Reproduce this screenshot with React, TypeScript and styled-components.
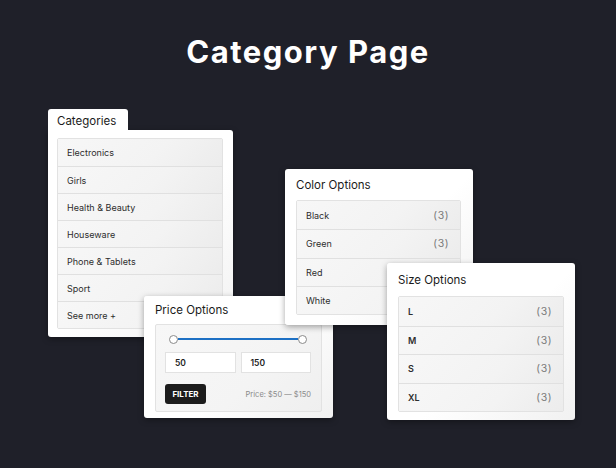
import React from "react";
import styled, { createGlobalStyle } from "styled-components";

const GlobalStyle = createGlobalStyle`
  html, body {
    margin: 0;
    padding: 0;
    background: #1f2029;
  }
  body {
    font-family: "Inter", "Open Sans", sans-serif;
  }
`;

const Page = styled.div`
  position: relative;
  width: 616px;
  height: 468px;
  background: #1f2029;
  overflow: hidden;
`;

const Heading = styled.h1`
  margin: 0;
  padding-top: 32px;
  text-align: center;
  color: #ffffff;
  font-family: "Inter", sans-serif;
  font-weight: 700;
  font-size: 31px;
  letter-spacing: 1.5px;
  line-height: 40px;
`;

// cards sit on a free canvas, overlapping each other
const Card = styled.div<{ $x: number; $y: number; $w: number; $h: number; $z: number }>`
  position: absolute;
  left: ${(p) => p.$x}px;
  top: ${(p) => p.$y}px;
  width: ${(p) => p.$w}px;
  height: ${(p) => p.$h}px;
  z-index: ${(p) => p.$z};
  box-sizing: border-box;
  background: linear-gradient(135deg, #ffffff 0%, #ffffff 55%, #f1f1f1 100%);
  border-radius: 3px;
  box-shadow: 0 2px 6px rgba(0, 0, 0, 0.35);
  display: flex;
  flex-direction: column;
`;

const CardTitle = styled.div<{ $h: number }>`
  height: ${(p) => p.$h}px;
  display: flex;
  align-items: center;
  padding-left: 11px;
  font-size: 11.5px;
  color: #1b1b1b;
`;

const Tab = styled.div`
  position: absolute;
  left: 0;
  top: -21px;
  width: 80px;
  height: 24px;
  box-sizing: border-box;
  background: #ffffff;
  border-radius: 3px 3px 0 0;
  padding: 5px 0 0 9px;
  font-size: 11.5px;
  color: #1b1b1b;
`;

const ListBox = styled.div<{ $m: string }>`
  margin: ${(p) => p.$m};
  border: 1px solid #e2e2e2;
  border-radius: 2px;
  overflow: hidden;
  display: flex;
  flex-direction: column;
`;

const Row = styled.div<{ $h: number; $bold?: boolean }>`
  height: ${(p) => p.$h}px;
  box-sizing: border-box;
  display: flex;
  align-items: center;
  justify-content: space-between;
  padding: 0 11px 0 9px;
  background: linear-gradient(135deg, #f7f7f7 0%, #f3f3f3 60%, #ececec 100%);
  font-size: 9px;
  font-weight: ${(p) => (p.$bold ? 600 : 400)};
  color: #2d2d2d;
  & + & {
    border-top: 1px solid #e0e0e0;
  }
`;

const Count = styled.span`
  font-size: 10.5px;
  font-weight: 400;
  color: #7a7a7a;
  letter-spacing: 0.5px;
`;

const PriceBox = styled.div`
  margin: 0 11px 6px 11px;
  flex: 1;
  border: 1px solid #e2e2e2;
  border-radius: 2px;
  background: linear-gradient(135deg, #f7f7f7 0%, #f4f4f4 60%, #efefef 100%);
  padding: 9px 10px 0 9px;
  display: flex;
  flex-direction: column;
`;

const Slider = styled.div`
  height: 10px;
  display: flex;
  align-items: center;
  padding: 0 4px;
`;

const Knob = styled.span`
  width: 7px;
  height: 7px;
  border-radius: 50%;
  border: 1px solid #8a8a8a;
  background: #ffffff;
  flex: none;
`;

const Track = styled.span`
  flex: 1;
  height: 2px;
  background: #1d70c4;
`;

const Inputs = styled.div`
  display: flex;
  gap: 5px;
  margin-top: 8px;
`;

const Field = styled.div`
  flex: 1;
  height: 21px;
  box-sizing: border-box;
  background: #ffffff;
  border: 1px solid #e2e2e2;
  display: flex;
  align-items: center;
  padding-left: 9px;
  font-size: 8.5px;
  font-weight: 600;
  color: #222;
`;

const Actions = styled.div`
  display: flex;
  align-items: center;
  justify-content: space-between;
  margin-top: 11px;
`;

const FilterButton = styled.div`
  width: 41px;
  height: 20px;
  border-radius: 3px;
  background: #1c1c1c;
  color: #ffffff;
  font-size: 8px;
  font-weight: 700;
  display: flex;
  align-items: center;
  justify-content: center;
`;

const PriceLabel = styled.span`
  font-size: 7.5px;
  color: #8a8a8a;
`;

const categories = ["Electronics", "Girls", "Health & Beauty", "Houseware", "Phone & Tablets", "Sport", "See more +"];
const colors = ["Black", "Green", "Red", "White"];
const sizes = ["L", "M", "S", "XL"];

const App: React.FC = () => {
  return (
    <Page>
      <GlobalStyle />
      <Heading>Category Page</Heading>

      <Card $x={48} $y={130} $w={185} $h={207} $z={1} style={{ borderTopLeftRadius: 0 }}>
        <Tab>Categories</Tab>
        <ListBox $m="8px 10px 0 9px">
          {categories.map((c) => (
            <Row key={c} $h={27}>
              {c}
            </Row>
          ))}
        </ListBox>
      </Card>

      <Card $x={144} $y={296} $w={189} $h={122} $z={2}>
        <CardTitle $h={28}>Price Options</CardTitle>
        <PriceBox>
          <Slider>
            <Knob />
            <Track />
            <Knob />
          </Slider>
          <Inputs>
            <Field>50</Field>
            <Field>150</Field>
          </Inputs>
          <Actions>
            <FilterButton>FILTER</FilterButton>
            <PriceLabel>Price: $50 — $150</PriceLabel>
          </Actions>
        </PriceBox>
      </Card>

      <Card $x={285} $y={169} $w={188} $h={156} $z={3}>
        <CardTitle $h={31}>Color Options</CardTitle>
        <ListBox $m="0 12px 0 11px">
          {colors.map((c) => (
            <Row key={c} $h={28.25}>
              {c}
              <Count>(3)</Count>
            </Row>
          ))}
        </ListBox>
      </Card>

      <Card $x={387} $y={263} $w={188} $h={157} $z={4}>
        <CardTitle $h={33}>Size Options</CardTitle>
        <ListBox $m="0 11px 0 11px">
          {sizes.map((s) => (
            <Row key={s} $h={28.5} $bold>
              {s}
              <Count>(3)</Count>
            </Row>
          ))}
        </ListBox>
      </Card>
    </Page>
  );
};

export default App;
